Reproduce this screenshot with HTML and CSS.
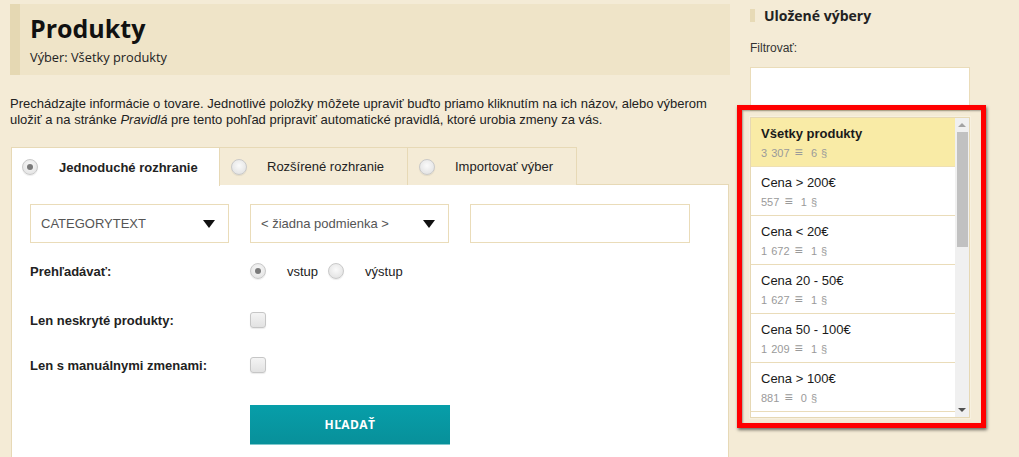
FILE: index.html
```html
<!DOCTYPE html>
<html lang="sk">
<head>
<meta charset="utf-8">
<title>Produkty</title>
<link rel="stylesheet" href="styles.css">
</head>
<body>
<div class="page">
  <div class="main">
    <div class="head">
      <h1 class="title">Produkty</h1>
      <div class="sub">Výber: Všetky produkty</div>
    </div>
    <p class="intro">Prechádzajte informácie o tovare. Jednotlivé položky môžete upraviť buďto priamo kliknutím na ich názov, alebo výberom<br>uložiť a na stránke <i>Pravidlá</i> pre tento pohľad pripraviť automatické pravidlá, ktoré urobia zmeny za vás.</p>
    <div class="tabs">
      <div class="tab tab1 active"><span class="radio on"></span><span class="tab-label">Jednoduché rozhranie</span></div>
      <div class="tab tab2"><span class="radio"></span><span class="tab-label">Rozšírené rozhranie</span></div>
      <div class="tab tab3"><span class="radio"></span><span class="tab-label">Importovať výber</span></div>
    </div>
    <div class="panel">
      <div class="fields">
        <div class="select"><span class="sel-text">CATEGORYTEXT</span><span class="arrow"></span></div>
        <div class="select"><span class="sel-text">&lt; žiadna podmienka &gt;</span><span class="arrow"></span></div>
        <div class="textinput"></div>
      </div>
      <div class="row row-a">
        <div class="label">Prehľadávať:</div>
        <div class="control"><span class="radio on"></span><span class="opt opt1">vstup</span><span class="radio"></span><span class="opt opt2">výstup</span></div>
      </div>
      <div class="row row-b">
        <div class="label">Len neskryté produkty:</div>
        <div class="control"><span class="check"></span></div>
      </div>
      <div class="row row-c">
        <div class="label">Len s manuálnymi zmenami:</div>
        <div class="control"><span class="check"></span></div>
      </div>
      <div class="btn-row"><div class="btn">HĽADAŤ</div></div>
    </div>
  </div>
  <aside class="side">
    <h2 class="side-title">Uložené výbery</h2>
    <div class="filter-label">Filtrovať:</div>
    <div class="filter-input"></div>
    <div class="list-wrap">
      <div class="list">
        <div class="items">
          <div class="item sel"><div class="name">Všetky produkty</div><div class="meta">3 307 <span class="lines">≡</span> &nbsp;6 §</div></div>
          <div class="item"><div class="name">Cena &gt; 200€</div><div class="meta">557 <span class="lines">≡</span> &nbsp;1 §</div></div>
          <div class="item"><div class="name">Cena &lt; 20€</div><div class="meta">1 672 <span class="lines">≡</span> &nbsp;1 §</div></div>
          <div class="item"><div class="name">Cena 20 - 50€</div><div class="meta">1 627 <span class="lines">≡</span> &nbsp;1 §</div></div>
          <div class="item"><div class="name">Cena 50 - 100€</div><div class="meta">1 209 <span class="lines">≡</span> &nbsp;1 §</div></div>
          <div class="item"><div class="name">Cena &gt; 100€</div><div class="meta">881 <span class="lines">≡</span> &nbsp;0 §</div></div>
        </div>
        <div class="scrollbar">
          <span class="sb-up"></span>
          <span class="sb-track"><span class="sb-thumb"></span></span>
          <span class="sb-down"></span>
        </div>
      </div>
      <div class="highlight"></div>
    </div>
  </aside>
</div>
</body>
</html>
```
FILE: styles.css
```css
html, body {
  margin: 0;
  padding: 0;
  background: #f4ebd6;
  height: 100%;
  overflow: hidden;
}
body {
  font-family: "Liberation Sans", Arial, sans-serif;
  font-size: 13px;
  color: #222;
}
.page {
  display: flex;
  align-items: flex-start;
}
.main {
  margin-left: 10px;
  width: 720px;
}
.head {
  margin-top: 4px;
  height: 71px;
  box-sizing: border-box;
  background: #efe4c8;
  border-left: 10px solid #e5d8b3;
  padding: 9px 0 0 10px;
}
.title {
  margin: 0;
  font-family: "Open Sans", sans-serif;
  font-weight: 700;
  font-size: 25px;
  line-height: 30px;
  color: #111;
}
.sub {
  margin-top: 6px;
  font-family: "Open Sans", sans-serif;
  font-size: 12.8px;
  line-height: 16px;
  color: #222;
}
.intro {
  margin: 21px 0 0 0;
  line-height: 16px;
  font-size: 13px;
  color: #222;
}
.tabs {
  display: flex;
  margin: 19px 0 0 1px;
  height: 38px;
  position: relative;
  z-index: 1;
  margin-bottom: -1px;
}
.tab {
  box-sizing: border-box;
  height: 38px;
  display: flex;
  align-items: center;
  border: 1px solid #e7d9b6;
  border-bottom: none;
  border-left: none;
  background: #f4ebd6;
  color: #222;
}
.tab1 { width: 209px; padding-left: 10px; border-left: 1px solid #e7d9b6; }
.tab2 { width: 188px; padding-left: 11px; }
.tab3 { width: 169px; padding-left: 11px; }
.tab.active {
  background: #fff;
  font-weight: 700;
  height: 39px;
}
.tab-label { margin-left: 20px; }
.tab1 .tab-label { margin-left: 21px; }

.radio {
  display: inline-block;
  width: 14px;
  height: 14px;
  border-radius: 50%;
  border: 1px solid #c9c9c9;
  background: radial-gradient(circle at 50% 40%, #fafafa 0%, #e6e6e6 70%, #d8d8d8 100%);
  box-shadow: 0 1px 1px rgba(0,0,0,0.08);
  position: relative;
  flex: none;
}
.radio.on::after {
  content: "";
  position: absolute;
  left: 4px;
  top: 4px;
  width: 6px;
  height: 6px;
  border-radius: 50%;
  background: #7a7a7a;
}

.panel {
  margin-left: 1px;
  width: 718px;
  box-sizing: border-box;
  background: #fff;
  border: 1px solid #e7d9b6;
  border-bottom: none;
  padding: 19px 0 0 18px;
  height: 273px;
}
.fields {
  display: flex;
  gap: 21px;
}
.select {
  box-sizing: border-box;
  width: 199px;
  height: 39px;
  border: 1px solid #eadcb9;
  display: flex;
  align-items: center;
  justify-content: space-between;
  padding: 0 13px 0 10px;
  color: #555;
  font-size: 13px;
}
.arrow {
  width: 0;
  height: 0;
  border-left: 6px solid transparent;
  border-right: 6px solid transparent;
  border-top: 8px solid #111;
}
.textinput {
  box-sizing: border-box;
  width: 220px;
  height: 39px;
  border: 1px solid #eadcb9;
}
.row {
  display: flex;
  align-items: center;
  height: 28px;
}
.row-a { margin-top: 14px; }
.row-b { margin-top: 21px; }
.row-c { margin-top: 17px; }
.label {
  width: 220px;
  font-weight: 700;
  color: #222;
}
.control {
  display: flex;
  align-items: center;
}
.opt { color: #222; }
.opt1 { margin: 0 10px 0 21px; }
.opt2 { margin: 0 0 0 21px; }
.check {
  display: inline-block;
  width: 14px;
  height: 14px;
  border: 1px solid #c6c6c6;
  border-radius: 3px;
  background: linear-gradient(#f4f4f4, #e2e2e2);
  box-shadow: 0 1px 1px rgba(0,0,0,0.08);
}
.btn-row {
  margin-top: 26px;
  padding-left: 220px;
}
.btn {
  width: 200px;
  height: 40px;
  box-sizing: border-box;
  background: linear-gradient(#079ea9, #08909a);
  border-bottom: 1px solid #7fc8cc;
  color: #fff;
  font-family: "Open Sans", sans-serif;
  font-weight: 700;
  font-size: 12px;
  letter-spacing: 0.4px;
  display: flex;
  align-items: center;
  justify-content: center;
}

.side {
  margin-left: 20px;
  width: 220px;
}
.side-title {
  margin: 9px 0 0 0;
  border-left: 5px solid #e7dab6;
  padding-left: 9px;
  height: 13px;
  font-family: "Open Sans", sans-serif;
  font-weight: 700;
  font-size: 14px;
  line-height: 13px;
  color: #222;
}
.filter-label {
  margin-top: 18px;
  font-size: 12px;
  line-height: 16px;
  color: #333;
}
.filter-input {
  margin-top: 11px;
  height: 44px;
  box-sizing: border-box;
  background: #fff;
  border: 1px solid #eadcb9;
}
.list-wrap {
  position: relative;
  margin-top: 6px;
}
.list {
  display: flex;
  box-sizing: border-box;
  height: 301px;
  border: 1px solid #e6d8b4;
  outline: 1px solid #f7f0df;
  overflow: hidden;
  background: #fff;
}
.items {
  flex: 1;
  min-width: 0;
}
.item {
  box-sizing: border-box;
  border-bottom: 1px solid #eadcb9;
  padding: 8px 0 0 10px;
  height: 49px;
}
.item.sel {
  background: #f9eba6;
  border-bottom-color: #efe0b2;
}
.item.sel .name { font-weight: 700; }
.name {
  font-size: 13px;
  line-height: 16px;
  color: #1a1a1a;
}
.meta {
  margin-top: 3px;
  font-size: 11px;
  line-height: 14px;
  color: #9a9a9a;
  word-spacing: 1px;
}
.lines {
  font-size: 14px;
  line-height: 14px;
  margin-left: 1px;
}
.scrollbar {
  width: 14px;
  flex: none;
  background: #f0f0f0;
  display: flex;
  flex-direction: column;
  align-items: center;
}
.sb-up, .sb-down {
  width: 0;
  height: 0;
  border-left: 4px solid transparent;
  border-right: 4px solid transparent;
  margin: 5px 0;
}
.sb-up { border-bottom: 4px solid #a3a3a3; }
.sb-down { border-top: 4px solid #505050; }
.sb-track {
  flex: 1;
  width: 100%;
  display: flex;
  justify-content: center;
}
.sb-thumb {
  width: 11px;
  height: 115px;
  background: #c1c1c1;
}
.highlight {
  position: absolute;
  top: -12px;
  left: -13px;
  right: -16px;
  bottom: -10px;
  border: 5px solid #f00;
  box-shadow: 1px 2px 3px rgba(0,0,0,0.55), inset 1px 1px 2px rgba(0,0,0,0.35);
  pointer-events: none;
}
```
